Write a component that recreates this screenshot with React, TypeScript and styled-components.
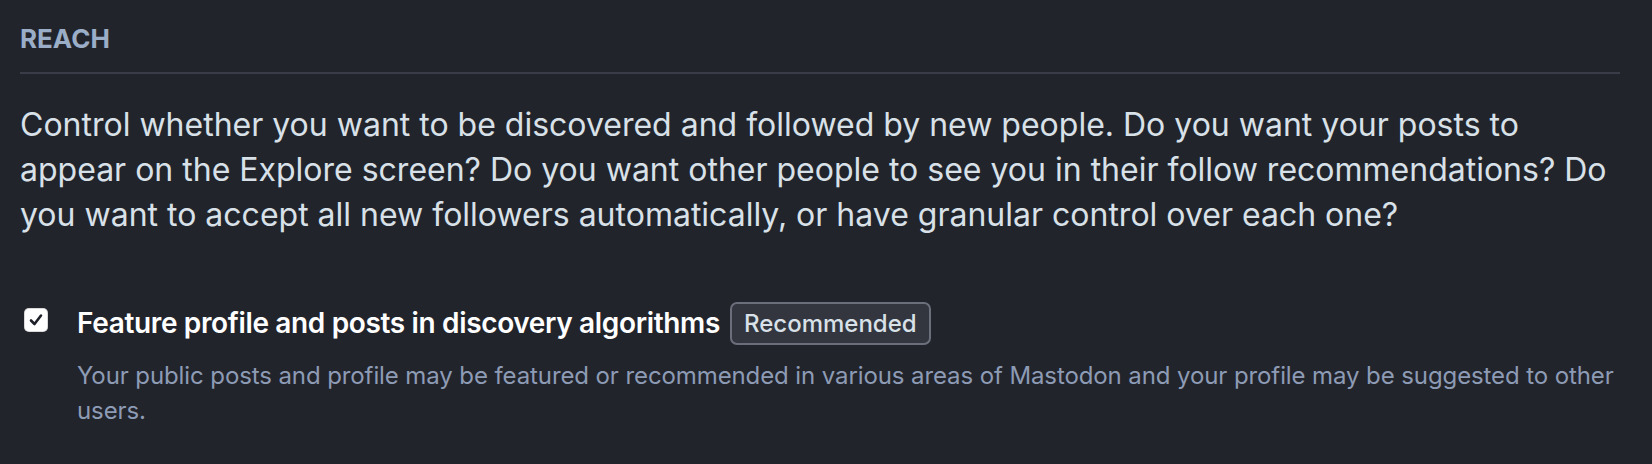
import React from "react";
import styled, { createGlobalStyle } from "styled-components";

const GlobalStyle = createGlobalStyle`
  html, body {
    margin: 0;
    padding: 0;
    background: #22242c;
  }
  body {
    font-family: Inter, "Noto Sans", sans-serif;
    -webkit-font-smoothing: antialiased;
  }
`;

const Page = styled.div`
  width: 1600px;
  padding: 24px 0 20px 20px;
  background: #22242c;
  box-sizing: content-box;
`;

const SectionTitle = styled.h4`
  margin: 0;
  font-size: 26px;
  line-height: 30px;
  font-weight: 700;
  color: #9baec8;
  text-transform: uppercase;
  padding-bottom: 18px;
  border-bottom: 2px solid #3a3d48;
`;

const Lead = styled.p`
  margin: 29px 0 0;
  font-size: 32px;
  line-height: 44.8px;
  color: #d9e1e8;
  font-weight: 400;
`;

const Field = styled.div`
  display: flex;
  align-items: flex-start;
  gap: 29px;
  margin-top: 65px;
  padding-left: 4px;
`;

const Check = styled.span`
  flex: 0 0 24px;
  width: 24px;
  height: 24px;
  margin-top: 6px;
  border-radius: 5px;
  background: #ffffff;
  display: flex;
  align-items: center;
  justify-content: center;
  box-shadow: inset 0 0 0 1px rgba(0, 0, 0, 0.15);
`;

const FieldBody = styled.div`
  display: flex;
  flex-direction: column;
  flex: 1;
`;

const LabelRow = styled.div`
  display: flex;
  align-items: center;
  gap: 10px;
  height: 43px;
`;

const Label = styled.span`
  font-size: 28px;
  line-height: 43px;
  font-weight: 600;
  letter-spacing: -0.35px;
  color: #ffffff;
`;

const Badge = styled.span`
  box-sizing: border-box;
  height: 43px;
  display: inline-flex;
  align-items: center;
  padding: 0 12px;
  border: 2px solid #6b6f7b;
  border-radius: 7px;
  background: #33353f;
  color: #d9e1e8;
  font-size: 24px;
  font-weight: 500;
`;

const Hint = styled.p`
  margin: 13px 0 0;
  font-size: 24px;
  line-height: 35px;
  letter-spacing: -0.1px;
  color: #8d9bb5;
`;

export default function App() {
  return (
    <>
      <GlobalStyle />
      <Page>
        <SectionTitle>Reach</SectionTitle>
        <Lead>
          Control whether you want to be discovered and followed by new people. Do you want your posts to
          appear on the Explore screen? Do you want other people to see you in their follow recommendations? Do
          you want to accept all new followers automatically, or have granular control over each one?
        </Lead>
        <Field>
          <Check>
            <svg width="16" height="16" viewBox="0 0 16 16" aria-hidden="true">
              <path d="M3 8.5 L6.5 12 L13 3.5" fill="none" stroke="#1f2128" strokeWidth="2.6" strokeLinecap="round" strokeLinejoin="round" />
            </svg>
          </Check>
          <FieldBody>
            <LabelRow>
              <Label>Feature profile and posts in discovery algorithms</Label>
              <Badge>Recommended</Badge>
            </LabelRow>
            <Hint>
              Your public posts and profile may be featured or recommended in various areas of Mastodon and your profile may be suggested to other users.
            </Hint>
          </FieldBody>
        </Field>
      </Page>
    </>
  );
}
